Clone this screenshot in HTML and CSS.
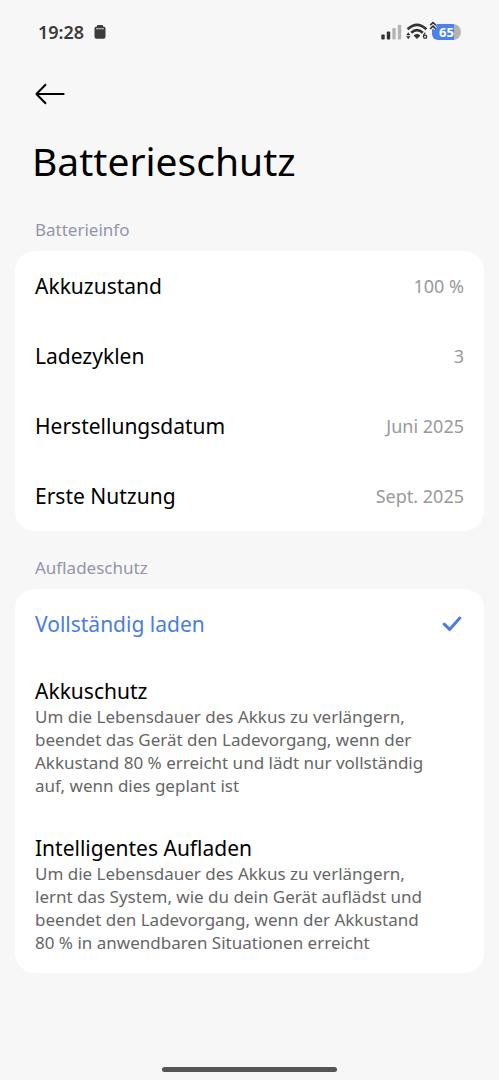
FILE: index.html
```html
<!DOCTYPE html>
<html lang="de">
<head>
<meta charset="utf-8">
<meta name="viewport" content="width=device-width, initial-scale=1">
<title>Batterieschutz</title>
<link rel="stylesheet" href="styles.css">
</head>
<body>
<div class="screen">
  <div class="status">
    <div class="status-left">
      <span class="clock">19:28</span>
      <svg width="12" height="14" viewBox="0 0 12 14" aria-hidden="true">
        <rect x="3" y="0" width="6" height="2" rx="0.6" fill="#3c3c3c"/>
        <rect x="0.5" y="1.6" width="11" height="12.2" rx="2" fill="#3c3c3c"/>
        <rect x="2" y="3" width="8" height="1.3" fill="#a8a8a8"/>
      </svg>
    </div>
    <div class="status-right">
      <svg width="21" height="16" viewBox="0 0 21 16" aria-hidden="true">
        <rect x="0.3" y="10.5" width="3.4" height="5" rx="1" fill="#333"/>
        <rect x="5.8" y="7.5" width="3.4" height="8" rx="1" fill="#333"/>
        <rect x="11.3" y="4" width="3.4" height="11.5" rx="1" fill="#b4b4b4"/>
        <rect x="16.8" y="0.8" width="3.4" height="14.7" rx="1" fill="#b4b4b4"/>
      </svg>
      <svg width="22" height="17" viewBox="0 0 22 17" aria-hidden="true">
        <g fill="none" stroke="#333">
          <path d="M1.6 6.2Q11 -2.4 20.4 6.2" stroke-width="2.6"/>
          <path d="M5.2 9.8Q11 4.6 16.8 9.8" stroke-width="2.6"/>
          <path d="M19.3 9.8Q17.4 11.2 17.4 13.8" stroke-width="1.3"/>
          <circle cx="19.1" cy="13.8" r="1.6" stroke-width="1.3"/>
        </g>
        <path d="M7.6 12.4Q11 9.6 14.4 12.4L11 16Z" fill="#333"/>
        <path d="M0.2 12.2L2.3 9.2L4.4 12.2ZM0.2 13.2L2.3 16.2L4.4 13.2Z" fill="#333"/>
      </svg>
      <div class="battery">
        <span class="battery-level">65</span>
        <svg class="boost" width="8" height="9" viewBox="0 0 8 9" aria-hidden="true">
          <path d="M1.2 4.2L4 1.6L6.8 4.2M1.2 7.8L4 5.2L6.8 7.8" fill="none" stroke="#f7f7f7" stroke-width="3.4"/>
          <path d="M1.2 4.2L4 1.6L6.8 4.2M1.2 7.8L4 5.2L6.8 7.8" fill="none" stroke="#333" stroke-width="1.6"/>
        </svg>
      </div>
    </div>
  </div>

  <header class="header">
    <button class="back" type="button" aria-label="Zurück">
      <svg width="30" height="22" viewBox="0 0 30 22" aria-hidden="true">
        <path d="M11 1.2L1.4 11L11 20.8M1.4 11H29.4" fill="none" stroke="#000" stroke-width="2" stroke-linejoin="round"/>
      </svg>
    </button>
    <h1 class="title">Batterieschutz</h1>
  </header>

  <main>
    <h2 class="section">Batterieinfo</h2>
    <dl class="card">
      <div class="row"><dt class="label">Akkuzustand</dt><dd class="value">100 %</dd></div>
      <div class="row"><dt class="label">Ladezyklen</dt><dd class="value">3</dd></div>
      <div class="row"><dt class="label">Herstellungsdatum</dt><dd class="value">Juni 2025</dd></div>
      <div class="row"><dt class="label">Erste Nutzung</dt><dd class="value">Sept. 2025</dd></div>
    </dl>

    <h2 class="section">Aufladeschutz</h2>
    <div class="card" role="radiogroup" aria-label="Aufladeschutz">
      <label class="row choice">
        <input class="radio" type="radio" name="mode" checked>
        <span class="label">Vollständig laden</span>
        <svg class="check" width="20" height="16" viewBox="0 0 20 16" aria-hidden="true">
          <path d="M2.2 8.2L7.6 13.4L17.8 2" fill="none" stroke="#4a7de0" stroke-width="3" stroke-linecap="round" stroke-linejoin="round"/>
        </svg>
      </label>
      <label class="option choice">
        <input class="radio" type="radio" name="mode">
        <span class="label">Akkuschutz</span>
        <span class="description">Um die Lebensdauer des Akkus zu verlängern, beendet das Gerät den Ladevorgang, wenn der Akkustand 80 % erreicht und lädt nur vollständig auf, wenn dies geplant ist</span>
      </label>
      <label class="option choice">
        <input class="radio" type="radio" name="mode">
        <span class="label">Intelligentes Aufladen</span>
        <span class="description">Um die Lebensdauer des Akkus zu verlängern, lernt das System, wie du dein Gerät auflädst und beendet den Ladevorgang, wenn der Akkustand 80 % in anwendbaren Situationen erreicht</span>
      </label>
    </div>
  </main>

  <div class="home-bar"></div>
</div>
</body>
</html>
```
FILE: styles.css
```css
* {
  box-sizing: border-box;
}

body {
  margin: 0;
  background: #f7f7f7;
  color: #000;
  font-family: "Noto Sans", "Open Sans", sans-serif;
}

.screen {
  display: flex;
  flex-direction: column;
  min-height: 100vh;
}

.status {
  display: flex;
  justify-content: space-between;
  align-items: center;
  height: 63px;
  padding: 0 38px;
}

.status-left {
  display: flex;
  align-items: center;
  gap: 10px;
}

.status-right {
  display: flex;
  align-items: center;
  gap: 4px;
}

.clock {
  color: #3c3c3c;
  font-size: 18px;
  font-weight: 600;
}

.battery {
  position: relative;
  width: 29px;
  height: 16px;
  border-radius: 6px 8px 8px 6px;
  background: linear-gradient(to right, #4b80ee 76%, #b4b4b4 76%);
}

.battery-level {
  display: block;
  color: #fff;
  font-size: 13px;
  font-weight: 700;
  line-height: 16px;
  text-align: center;
}

.boost {
  position: absolute;
  top: -3px;
  left: -3px;
}

.header {
  padding: 20px 32px 4px;
}

.back {
  display: block;
  margin: 0 0 0 3px;
  padding: 0;
  border: 0;
  background: none;
  line-height: 0;
}

.title {
  margin: 28px 0 0;
  font-size: 39px;
  font-weight: 400;
  line-height: 56px;
}

.section {
  margin: 24px 0 8px;
  padding: 0 35px;
  color: #9494ac;
  font-size: 17px;
  font-weight: 400;
  line-height: 26px;
}

.card {
  margin: 0 15px;
  border-radius: 20px;
  background: #fff;
}

.row {
  display: flex;
  justify-content: space-between;
  align-items: center;
  height: 70px;
  padding: 0 20px;
}

.label {
  font-size: 21px;
  line-height: 28px;
}

.value {
  margin: 0;
  color: #999;
  font-size: 18px;
}

.choice {
  position: relative;
  cursor: pointer;
}

.radio {
  position: absolute;
  inset: 0;
  margin: 0;
  opacity: 0;
}

.radio:checked ~ .label {
  color: #4a7de0;
}

.check {
  margin-right: 2px;
}

.option {
  display: flex;
  flex-direction: column;
  padding: 18px 52px 19px 20px;
}

.description {
  color: #666;
  font-size: 17px;
  line-height: 23px;
}

.home-bar {
  width: 35%;
  height: 5px;
  margin: auto auto 8px;
  border-radius: 3px;
  background: #555;
}
```
